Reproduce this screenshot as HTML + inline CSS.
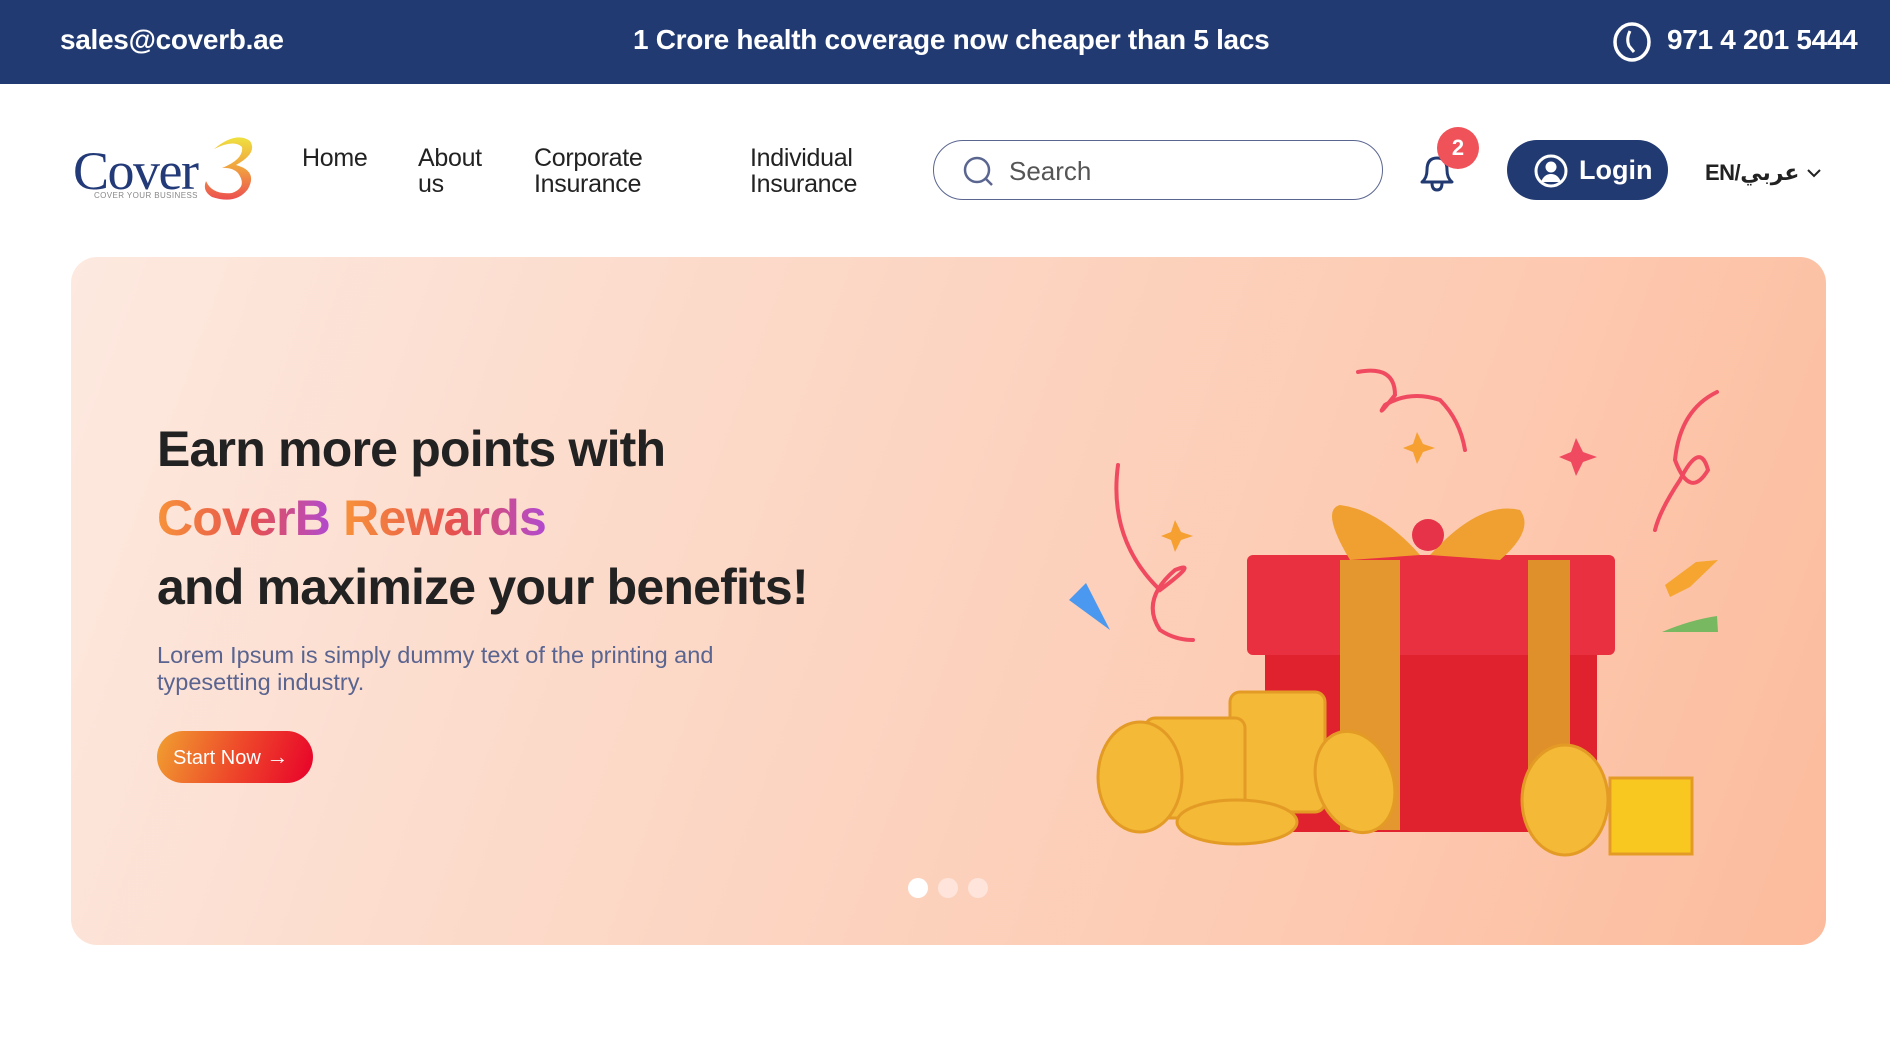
<!DOCTYPE html>
<html><head><meta charset="utf-8"><style>
*{margin:0;padding:0;box-sizing:border-box}
body{width:1890px;height:1049px;background:#fff;font-family:"Liberation Sans",sans-serif;position:relative;overflow:hidden}
.top{position:absolute;left:0;top:0;width:1890px;height:84px;background:#223a72;color:#fff;font-weight:bold;font-size:28px}
.top span{position:absolute;top:24px;letter-spacing:-0.3px}
.nav{position:absolute;font-size:25px;color:#222;line-height:26px;letter-spacing:-0.3px}
.hero{position:absolute;left:71px;top:257px;width:1755px;height:688px;border-radius:26px;background:linear-gradient(110deg,#fde9e0 0%,#fcd9c8 35%,#fdc9b0 75%,#fcbb9c 100%);overflow:hidden}
h1{position:absolute;left:86px;font-size:50px;font-weight:bold;color:#222;letter-spacing:-0.8px;white-space:nowrap}
.g{background:linear-gradient(90deg,#f7923a,#e6504f 55%,#b14ad0);-webkit-background-clip:text;background-clip:text;color:transparent}
</style></head><body>
<div class="top">
<span style="left:60px">sales@coverb.ae</span>
<span style="left:633px">1 Crore health coverage now cheaper than 5 lacs</span>
<svg style="position:absolute;left:1612px;top:21px" width="40" height="42" viewBox="0 0 40 42"><ellipse cx="20" cy="21" rx="17" ry="18" fill="none" stroke="#fff" stroke-width="3.5"/><path d="M18 10 Q14 18 17 25 L22 31" fill="none" stroke="#fff" stroke-width="3"/></svg>
<span style="left:1667px">971 4 201 5444</span>
</div>
<div style="position:absolute;left:73px;top:140px;font-family:'Liberation Serif',serif;font-size:54px;color:#233a78;letter-spacing:-1.5px">Cover</div>
<svg style="position:absolute;left:196px;top:135px" width="64" height="68" viewBox="0 0 64 68"><defs><linearGradient id="lb" x1="0" y1="0" x2="0" y2="1"><stop offset="0" stop-color="#efe040"/><stop offset=".5" stop-color="#f0a040"/><stop offset="1" stop-color="#ec5050"/></linearGradient></defs><path d="M18 14 Q40 -4 54 6 Q62 18 40 30 Q62 36 52 54 Q40 70 16 62 Q6 56 10 46 Q16 60 36 58 Q52 52 42 38 Q36 32 26 33 Q48 24 46 12 Q38 4 18 14Z" fill="url(#lb)"/></svg>
<div style="position:absolute;left:94px;top:191px;font-size:8px;color:#888;letter-spacing:.4px">COVER YOUR BUSINESS</div>
<div class="nav" style="left:302px;top:145px">Home</div>
<div class="nav" style="left:418px;top:145px">About<br>us</div>
<div class="nav" style="left:534px;top:145px">Corporate<br>Insurance</div>
<div class="nav" style="left:750px;top:145px">Individual<br>Insurance</div>
<div style="position:absolute;left:933px;top:140px;width:450px;height:60px;border:1.5px solid #5b6690;border-radius:30px"></div>
<svg style="position:absolute;left:962px;top:155px" width="34" height="34" viewBox="0 0 34 34"><circle cx="15" cy="15" r="12" fill="none" stroke="#5b6690" stroke-width="2.5"/><path d="M24 24 L30 30" stroke="#5b6690" stroke-width="2.5"/></svg>
<div style="position:absolute;left:1009px;top:156px;font-size:26px;color:#555">Search</div>
<svg style="position:absolute;left:1416px;top:150px" width="44" height="44" viewBox="0 0 44 44"><path d="M6 32 Q11 28 11 20 Q11 8 21 8 Q31 8 31 20 Q31 28 36 32 Z" fill="none" stroke="#223a72" stroke-width="3" stroke-linejoin="round"/><path d="M16 33 Q16 40 21 40 Q26 40 26 33" fill="none" stroke="#223a72" stroke-width="3"/></svg>
<div style="position:absolute;left:1437px;top:127px;width:42px;height:42px;border-radius:50%;background:#f0525a;color:#fff;font-weight:bold;font-size:22px;text-align:center;line-height:42px">2</div>
<div style="position:absolute;left:1507px;top:140px;width:161px;height:60px;border-radius:30px;background:#223a72"></div>
<svg style="position:absolute;left:1533px;top:153px" width="36" height="36" viewBox="0 0 36 36"><circle cx="18" cy="18" r="15" fill="none" stroke="#fff" stroke-width="3"/><circle cx="18" cy="14" r="5.5" fill="#fff"/><path d="M8 29 Q11 21 18 21 Q25 21 28 29Z" fill="#fff"/></svg>
<div style="position:absolute;left:1579px;top:155px;font-size:27px;font-weight:bold;color:#fff">Login</div>
<div style="position:absolute;left:1705px;top:160px;font-size:22px;font-weight:bold;color:#222;font-family:'Liberation Sans','DejaVu Sans',sans-serif;letter-spacing:-0.5px">EN/عربي</div>
<svg style="position:absolute;left:1806px;top:166px" width="16" height="14" viewBox="0 0 16 14"><path d="M2 4 L8 10 L14 4" fill="none" stroke="#222" stroke-width="2"/></svg>

<div class="hero">
<h1 style="top:163px">Earn more points with</h1>
<h1 style="top:232px"><span class="g">CoverB</span> <span class="g">Rewards</span></h1>
<h1 style="top:301px">and maximize your benefits!</h1>
<div style="position:absolute;left:86px;top:385px;font-size:23.5px;line-height:27px;color:#5a6490">Lorem Ipsum is simply dummy text of the printing and<br>typesetting industry.</div>
<div style="position:absolute;left:86px;top:474px;width:156px;height:52px;border-radius:26px;background:linear-gradient(110deg,#f0a030,#ee4a2a 50%,#e8002a);color:#fff;font-size:20px;line-height:52px;padding-left:16px">Start Now <span style="font-size:22px">&#8594;</span></div>
<div style="position:absolute;left:837px;top:621px;width:20px;height:20px;border-radius:50%;background:#fff"></div>
<div style="position:absolute;left:867px;top:621px;width:20px;height:20px;border-radius:50%;background:#fee4da"></div>
<div style="position:absolute;left:897px;top:621px;width:20px;height:20px;border-radius:50%;background:#fee4da"></div>

<svg style="position:absolute;left:0;top:0" width="1755" height="688" viewBox="71 257 1755 688">
<g fill="none" stroke="#f04a60" stroke-width="4" stroke-linecap="round">
<path d="M1118 465 Q1108 540 1160 590 Q1200 560 1175 570 Q1140 600 1160 630 Q1175 640 1193 640"/>
<path d="M1358 372 Q1395 365 1395 395 Q1375 420 1385 405 Q1410 390 1440 400 Q1460 420 1465 450"/>
<path d="M1717 392 Q1680 410 1675 460 Q1690 500 1708 470 Q1700 440 1680 480 Q1660 510 1655 530"/>
</g>
<path d="M1175 520 l6 12 l12 4 l-12 4 l-6 12 l-4-12 l-10-4 l10-4z" fill="#f5a030"/>
<path d="M1417 432 l6 12 l12 4 l-12 4 l-6 12 l-4-12 l-10-4 l10-4z" fill="#f5a030"/>
<path d="M1576 438 l7 14 l14 5 l-14 5 l-7 14 l-5-14 l-12-5 l12-5z" fill="#f04a60"/>
<path d="M1069 600 L1086 583 L1110 630 Z" fill="#4a98f0"/>
<path d="M1665 585 L1696 562 L1718 560 L1690 587 L1670 597Z" fill="#f5a530"/>
<path d="M1662 632 Q1690 620 1717 616 L1718 632 Z" fill="#78b860"/>
<rect x="1265" y="640" width="332" height="192" fill="#e0222e"/>
<rect x="1247" y="555" width="368" height="100" rx="6" fill="#e83040"/>
<rect x="1340" y="560" width="60" height="270" fill="#e4972e"/>
<rect x="1528" y="560" width="42" height="270" fill="#e0902a"/>
<path d="M1350 560 Q1320 510 1340 505 Q1380 510 1420 555 Z" fill="#f0a030"/>
<path d="M1430 555 Q1480 500 1520 510 Q1535 530 1500 560 Z" fill="#f0a030"/>
<circle cx="1428" cy="535" r="16" fill="#e6334a"/>
<g fill="#f3b937" stroke="#e39b25" stroke-width="3">
<rect x="1230" y="692" width="95" height="120" rx="10"/>
<rect x="1145" y="718" width="100" height="100" rx="10"/>
<ellipse cx="1140" cy="777" rx="42" ry="55"/>
<ellipse cx="1237" cy="822" rx="60" ry="22"/>
<ellipse cx="1355" cy="782" rx="38" ry="52" transform="rotate(-20 1355 782)"/>
<rect x="1610" y="778" width="82" height="76" fill="#f8c820"/>
<ellipse cx="1565" cy="800" rx="43" ry="55"/>
</g>
</svg>
</div>
</body></html>
